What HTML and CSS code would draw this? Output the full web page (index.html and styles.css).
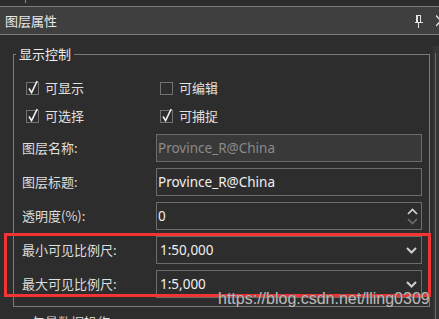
FILE: index.html
```html
<!DOCTYPE html>
<html lang="zh-CN">

<head>
    <meta charset="UTF-8">
    <title>图层属性</title>
    <link rel="stylesheet" href="styles.css">
</head>

<body>
    <div class="window">
        <div class="topstrip"><span class="tick"></span></div>

        <!-- Panel title -->
        <div class="titlebar">
            <span class="title">图层属性</span>
            <svg class="pin" width="8" height="13" viewBox="0 0 8 13">
                <rect x="1.5" y="0.5" width="4" height="7" fill="none" stroke="#e4e4e4" />
                <rect x="1" y="0" width="2" height="8" fill="#e4e4e4" />
                <line x1="0" y1="7.5" x2="8" y2="7.5" stroke="#e4e4e4" />
                <line x1="3.5" y1="8" x2="3.5" y2="13" stroke="#e4e4e4" />
            </svg>
            <svg class="close" width="3" height="12" viewBox="0 0 3 12">
                <line x1="0" y1="0.5" x2="10" y2="11" stroke="#e4e4e4" stroke-width="1.4" />
                <line x1="0" y1="11" x2="10" y2="0.5" stroke="#e4e4e4" stroke-width="1.4" />
            </svg>
        </div>

        <div class="content">
            <div class="main">
                <fieldset class="group">
                    <legend>显示控制</legend>

                    <div class="checks">
                        <label class="check">
                            <svg width="14" height="15" viewBox="0 0 14 15">
                                <rect x="0.5" y="2.5" width="12" height="12" fill="none" stroke="#727272" />
                                <polyline points="3,8.5 5.6,12.6 11.2,1" fill="none" stroke="#f0f0f0" stroke-width="1.6" />
                            </svg>
                            可显示
                        </label>
                        <label class="check">
                            <svg width="14" height="15" viewBox="0 0 14 15">
                                <rect x="0.5" y="2.5" width="12" height="12" fill="none" stroke="#727272" />
                            </svg>
                            可编辑
                        </label>
                        <label class="check">
                            <svg width="14" height="15" viewBox="0 0 14 15">
                                <rect x="0.5" y="2.5" width="12" height="12" fill="none" stroke="#727272" />
                                <polyline points="3,8.5 5.6,12.6 11.2,1" fill="none" stroke="#f0f0f0" stroke-width="1.6" />
                            </svg>
                            可选择
                        </label>
                        <label class="check">
                            <svg width="14" height="15" viewBox="0 0 14 15">
                                <rect x="0.5" y="2.5" width="12" height="12" fill="none" stroke="#727272" />
                                <polyline points="3,8.5 5.6,12.6 11.2,1" fill="none" stroke="#f0f0f0" stroke-width="1.6" />
                            </svg>
                            可捕捉
                        </label>
                    </div>

                    <div class="form">
                        <div class="row">
                            <span class="label">图层名称:</span>
                            <div class="field disabled">Province_R@China</div>
                        </div>
                        <div class="row">
                            <span class="label">图层标题:</span>
                            <div class="field">Province_R@China</div>
                        </div>
                        <div class="row">
                            <span class="label">透明度(%):</span>
                            <div class="field spin">
                                <span>0</span>
                                <svg width="11" height="17" viewBox="0 0 11 17">
                                    <polyline points="1,6 5.5,1.5 10,6" fill="none" stroke="#d4d4d4" stroke-width="1.7" />
                                    <polyline points="1,11 5.5,15.5 10,11" fill="none" stroke="#6e6e6e" stroke-width="1.7" />
                                </svg>
                            </div>
                        </div>
                        <div class="row">
                            <span class="label">最小可见比例尺:</span>
                            <div class="field combo">
                                <span>1:50,000</span>
                                <svg width="11" height="7" viewBox="0 0 11 7">
                                    <polyline points="1,1 5.5,5.5 10,1" fill="none" stroke="#d0d0d0" stroke-width="2" />
                                </svg>
                            </div>
                        </div>
                        <div class="row">
                            <span class="label">最大可见比例尺:</span>
                            <div class="field combo">
                                <span>1:5,000</span>
                                <svg width="11" height="7" viewBox="0 0 11 7">
                                    <polyline points="1,1 5.5,5.5 10,1" fill="none" stroke="#d0d0d0" stroke-width="2" />
                                </svg>
                            </div>
                        </div>
                    </div>
                </fieldset>

                <div class="next-group">矢量数据操作</div>
            </div>

            <div class="scroll"><div class="scroll-line"></div></div>
        </div>

        <!-- annotation over the screenshot -->
        <div class="mark"></div>
        <div class="watermark">https://blog.csdn.net/lling0309</div>
    </div>
</body>

</html>
```

FILE: styles.css
```css
* {
    margin: 0;
    padding: 0;
    box-sizing: border-box;
}

body {
    background-color: #2d2d2d;
    font-family: "Noto Sans", "Noto Sans CJK SC", sans-serif;
    color: #e0e0e0;
    overflow: hidden;
}

.window {
    position: relative;
    width: 439px;
    height: 319px;
    overflow: hidden;
}

/* Top strip */
.topstrip {
    height: 6px;
    padding-left: 25px;
}

.tick {
    display: block;
    width: 1px;
    height: 3px;
    background-color: #8a8a8a;
}

/* Title bar */
.titlebar {
    display: flex;
    align-items: center;
    height: 29px;
    background-color: #3f3f3f;
    border-top: 1px solid #7c7c7c;
    border-bottom: 1px solid #7c7c7c;
}

.title {
    flex: 1;
    padding-left: 5px;
    font-family: "Noto Sans CJK SC", sans-serif;
    font-size: 13px;
    line-height: 14px;
    color: #e8e8e8;
}

.pin {
    flex-shrink: 0;
    margin-right: 13px;
    margin-top: 1px;
}

.close {
    flex-shrink: 0;
    margin-top: 1px;
}

/* Content */
.content {
    display: flex;
}

.main {
    flex: 0 0 433px;
}

.group {
    width: 417px;
    margin: 12px 0 0 13px;
    padding: 0 7px 8px 0;
    border: 1px solid #7a7a7a;
    min-inline-size: 0;
}

.group legend {
    margin-left: 2px;
    padding: 0 3px;
    font-family: "Noto Sans CJK SC", sans-serif;
    font-size: 13px;
    line-height: 14px;
    color: #ececec;
}

/* Check boxes */
.checks {
    display: grid;
    grid-template-columns: 134px 1fr;
    grid-auto-rows: 28px;
    margin: 13px 0 0 12px;
}

.check {
    display: flex;
    align-items: center;
    gap: 5px;
    font-family: "Noto Sans CJK SC", sans-serif;
    font-size: 13px;
    line-height: 14px;
}

.check svg {
    margin-top: -2px;
}

/* Label / field rows */
.form {
    display: flex;
    flex-direction: column;
    gap: 6px;
    margin-top: 4px;
}

.row {
    display: flex;
    align-items: center;
    height: 28px;
    padding-left: 8px;
}

.label {
    width: 134px;
    font-family: "Noto Sans CJK SC", sans-serif;
    font-size: 13px;
    line-height: 14px;
    color: #dedede;
}

.field {
    flex: 1;
    display: flex;
    align-items: center;
    justify-content: space-between;
    height: 28px;
    padding: 0 3px 0 1px;
    border: 1px solid #6c6c6c;
    font-size: 13.5px;
    line-height: 16px;
    color: #f0f0f0;
}

.field.disabled {
    background-color: #393939;
    color: #8a8a8a;
}

.spin {
    padding-right: 3px;
}

.combo {
    padding: 0 4px 0 3px;
}

/* Next (cut) group */
.next-group {
    margin: 8px 0 0 32px;
    font-family: "Noto Sans CJK SC", sans-serif;
    font-size: 13px;
    line-height: 14px;
    color: #dcdcdc;
}

/* Right scroll edge */
.scroll {
    flex: 1;
    margin-top: 11px;
    padding-left: 2px;
    background-color: #363636;
}

.scroll-line {
    height: 300px;
    margin-top: 7px;
    border-left: 1px solid #6a6a6a;
}

/* Red annotation box */
.mark {
    position: absolute;
    left: 4px;
    top: 233px;
    width: 427px;
    height: 64px;
    border: 3px solid #f23434;
}

.watermark {
    position: absolute;
    left: 218px;
    top: 291px;
    font-family: "Liberation Sans", Arial, sans-serif;
    font-size: 16px;
    line-height: 16px;
    color: #b8b8b8;
    text-shadow: 0 0 1px #4a4a4a;
}
```
